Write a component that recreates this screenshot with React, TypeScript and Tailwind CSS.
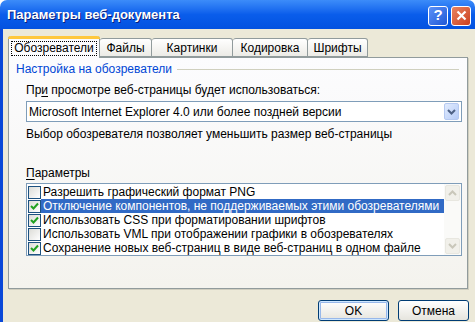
import React from "react";

interface Option {
    label: string;
    checked: boolean;
    selected?: boolean;
}

const options: Option[] = [
    { label: "Разрешить графический формат PNG", checked: false },
    { label: "Отключение компонентов, не поддерживаемых этими обозревателями", checked: true, selected: true },
    { label: "Использовать CSS при форматировании шрифтов", checked: true },
    { label: "Использовать VML при отображении графики в обозревателях", checked: false },
    { label: "Сохранение новых веб-страниц в виде веб-страниц в одном файле", checked: true },
];

const tabs = ["Обозреватели", "Файлы", "Картинки", "Кодировка", "Шрифты"];
const tabWidths = ["w-[92px]", "w-[52px]", "w-[81px]", "w-[75px]", "w-[60px]"];

const Chevron: React.FC<{ up?: boolean; color: string }> = ({ up, color }) => (
    <svg width="9" height="6" viewBox="0 0 9 6">
        <path
            d={up ? "M1 5 L4.5 1.5 L8 5" : "M1 1 L4.5 4.5 L8 1"}
            fill="none"
            stroke={color}
            strokeWidth="2"
        />
    </svg>
);

const Checkbox: React.FC<{ checked: boolean }> = ({ checked }) => (
    <div className="w-[13px] h-[13px] border border-[#1C5180] bg-gradient-to-br from-[#DCDCD7] to-white flex items-center justify-center shrink-0">
        {checked && (
            <svg width="9" height="9" viewBox="0 0 9 9">
                <path d="M1 4 L3.5 6.5 L8 1.5" fill="none" stroke="#21A121" strokeWidth="2" />
            </svg>
        )}
    </div>
);

const XpButton: React.FC<{ label: string; isDefault?: boolean }> = ({ label, isDefault }) => (
    <button
        className={`w-[71px] h-[21px] rounded-[3px] border border-[#003C74] bg-gradient-to-b from-white to-[#E6E5DE] text-[12px] text-black ${
            isDefault ? "shadow-[inset_0_0_0_1px_#CEE7FF,inset_0_0_0_2px_#98B8EA]" : ""
        }`}
    >
        {label}
    </button>
);

const App: React.FC = () => {
    return (
        <div className="w-[475px] h-[322px] flex flex-col overflow-hidden font-['Liberation_Sans',Tahoma,sans-serif] text-[12px] text-black">
            {/* title bar */}
            <div className="h-[29px] shrink-0 rounded-t-[7px] bg-gradient-to-b from-[#3C8CF9] via-[#0A5DEB] to-[#0352E0] flex items-center pl-[7px] pr-[4px]">
                <span className="text-white font-bold text-[13px] [text-shadow:1px_1px_0_#0A1E7A] flex-1">
                    Параметры веб-документа
                </span>
                <div className="flex gap-[3px] mt-[2px]">
                    <div className="w-[20px] h-[20px] rounded-[3px] border border-white bg-gradient-to-br from-[#5C92F8] to-[#1F57D6] flex items-center justify-center text-white font-bold text-[15px]">
                        ?
                    </div>
                    <div className="w-[20px] h-[20px] rounded-[3px] border border-white bg-gradient-to-br from-[#E8835F] to-[#CB3E1C] flex items-center justify-center">
                        <svg width="11" height="11" viewBox="0 0 11 11">
                            <path d="M1.5 1.5 L9.5 9.5 M9.5 1.5 L1.5 9.5" stroke="white" strokeWidth="2.2" />
                        </svg>
                    </div>
                </div>
            </div>

            {/* body */}
            <div className="flex-1 flex flex-col bg-[#ECE9D8] border-l-[3px] border-[#0A48D8] pl-[5px] pr-[7px] pt-[6px]">
                {/* tab strip */}
                <div className="flex items-end h-[22px] relative z-10">
                    {tabs.map((t, i) =>
                        i === 0 ? (
                            <div
                                key={t}
                                className={`${tabWidths[i]} h-[22px] -mb-px bg-[#FCFCFE] border border-[#919B9C] border-b-0 border-t-0 rounded-t-[3px] flex flex-col`}
                            >
                                <div className="h-[3px] bg-[#FFC83C] rounded-t-[3px] -mx-px" />
                                <div className="flex-1 flex items-center justify-center">
                                    <span className="px-[2px] leading-[13px] border border-dotted border-black">{t}</span>
                                </div>
                            </div>
                        ) : (
                            <div
                                key={t}
                                className={`${tabWidths[i]} h-[19px] bg-gradient-to-b from-white to-[#ECEBE6] border border-[#919B9C] border-l-0 rounded-t-[3px] flex items-center justify-center`}
                            >
                                {t}
                            </div>
                        )
                    )}
                </div>

                {/* tab panel */}
                <div className="h-[232px] border border-[#919B9C] bg-gradient-to-b from-[#FCFCFE] to-[#F4F3EE] shadow-[1px_1px_0_#D0CEBF] pl-[7px] pr-[5px] pt-[4px] flex flex-col">
                    <div className="flex items-center gap-[5px] h-[14px]">
                        <span className="text-[#0046D5]">Настройка на обозреватели</span>
                        <div className="flex-1 h-px bg-[#D0D0BF] mr-[3px]" />
                    </div>

                    <div className="pl-[10px] flex flex-col">
                        <div className="mt-[7px] h-[14px] leading-[14px]">
                            Пр<u className="underline-offset-2">и</u> просмотре веб-страницы будет использоваться:
                        </div>
                        <div className="mt-[4px] h-[21px] border border-[#7F9DB9] bg-white flex items-center">
                            <span className="flex-1 pl-[2px]">Microsoft Internet Explorer 4.0 или более поздней версии</span>
                            <div className="w-[15px] h-[17px] mr-[2px] rounded-[2px] border border-[#B5C9F1] bg-gradient-to-br from-[#E1EBFD] to-[#B6CCF8] flex items-center justify-center">
                                <Chevron color="#4D6185" />
                            </div>
                        </div>
                        <div className="mt-[5px] h-[14px] leading-[14px]">
                            Выбор обозревателя позволяет уменьшить размер веб-страницы
                        </div>

                        <div className="mt-[25px] h-[14px] leading-[14px]">
                            <u className="underline-offset-2">П</u>араметры
                        </div>
                        <div className="mt-[3px] h-[73px] border border-[#7F9DB9] bg-white flex pt-[1px]">
                            <div className="flex-1 flex flex-col">
                                {options.map((o) => (
                                    <div key={o.label} className="h-[14px] flex items-center pl-[1px]">
                                        <Checkbox checked={o.checked} />
                                        <div
                                            className={`flex-1 h-[14px] leading-[14px] pl-[2px] whitespace-nowrap ${
                                                o.selected ? "bg-[#316AC5] text-white" : ""
                                            }`}
                                        >
                                            {o.label}
                                        </div>
                                    </div>
                                ))}
                            </div>
                            <div className="w-[17px] -mt-[1px] flex flex-col justify-between bg-[#FAFAF8] py-[1px] pl-[1px]">
                                <div className="w-[15px] h-[16px] rounded-[2px] border border-[#E8E7E0] bg-[#F1F0EA] flex items-center justify-center">
                                    <Chevron up color="#C9C7BA" />
                                </div>
                                <div className="w-[15px] h-[16px] rounded-[2px] border border-[#E8E7E0] bg-[#F1F0EA] flex items-center justify-center">
                                    <Chevron color="#C9C7BA" />
                                </div>
                            </div>
                        </div>
                    </div>
                </div>

                {/* buttons */}
                <div className="flex justify-end gap-[9px] mt-[11px] -mr-[1px]">
                    <XpButton label="OK" isDefault />
                    <XpButton label="Отмена" />
                </div>
            </div>
        </div>
    );
};

export default App;
